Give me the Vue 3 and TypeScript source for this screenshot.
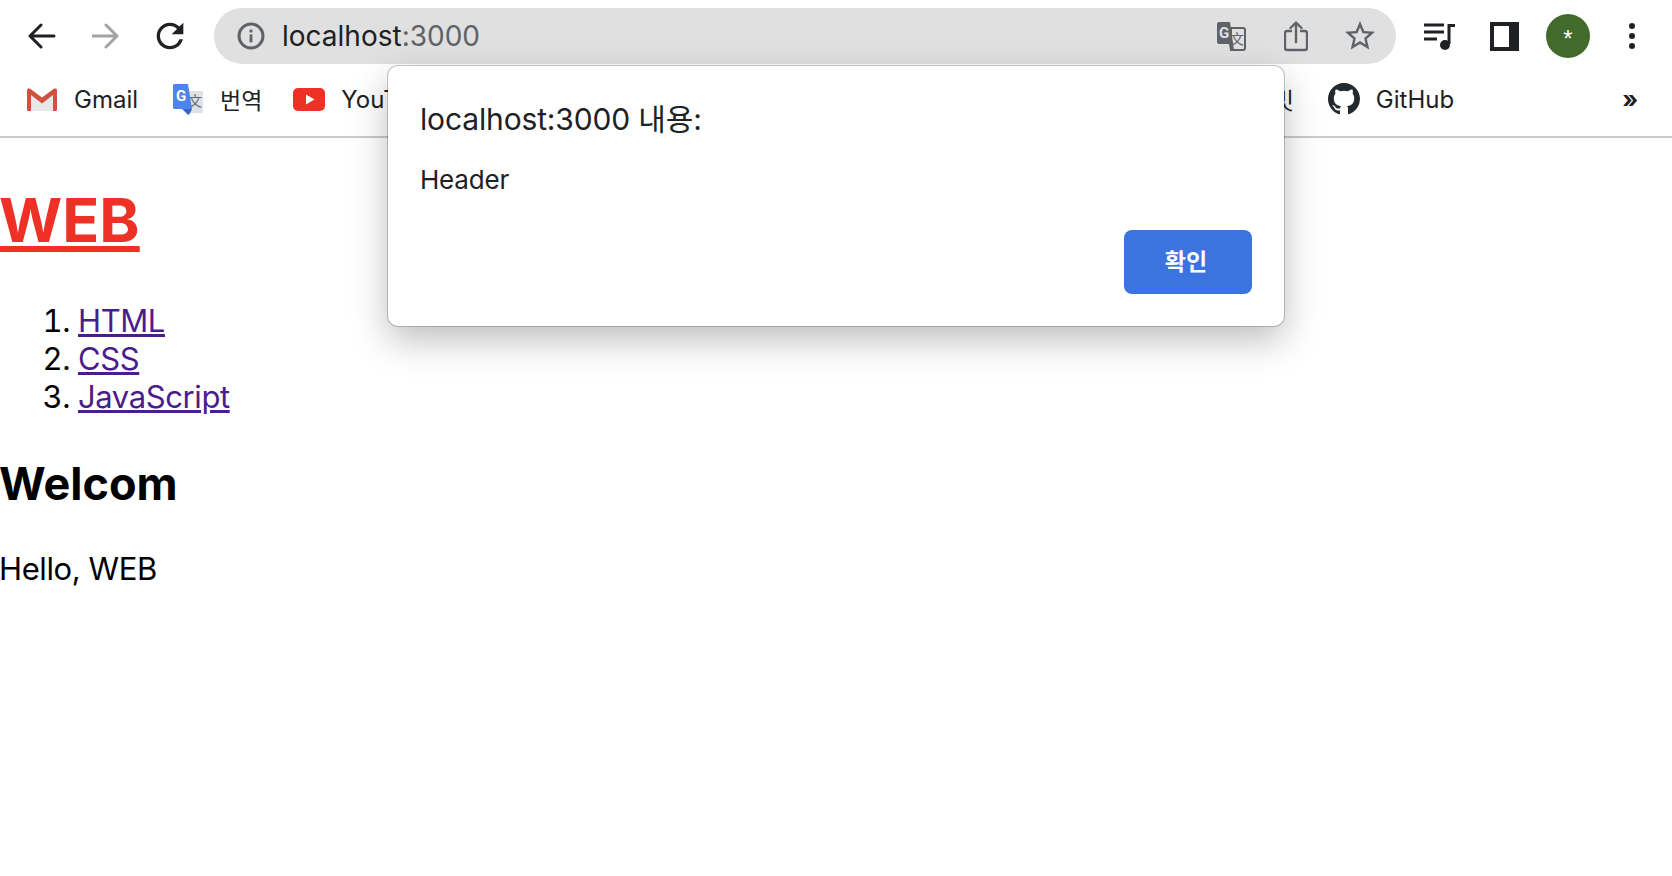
<template>
  <div class="browser">
    <header class="toolbar">
      <button class="tool" aria-label="back">
        <svg width="28" height="28" viewBox="0 0 28 28"><path d="M26 14H2M13 3 2 14l11 11" class="stroke dark" /></svg>
      </button>
      <button class="tool" aria-label="forward">
        <svg width="28" height="28" viewBox="0 0 28 28"><path d="M1 14h24M14 3l11 11-11 11" class="stroke muted" /></svg>
      </button>
      <button class="tool" aria-label="reload">
        <svg width="40" height="40" viewBox="0 0 24 24"><path fill="#202124" d="M17.65 6.35A7.958 7.958 0 0 0 12 4c-4.42 0-7.99 3.58-7.99 8s3.57 8 7.99 8c3.73 0 6.84-2.55 7.73-6h-2.08A5.99 5.99 0 0 1 12 18c-3.31 0-6-2.69-6-6s2.69-6 6-6c1.66 0 3.14.69 4.22 1.78L13 11h7V4l-2.35 2.35z" /></svg>
      </button>

      <div class="omnibox">
        <svg class="info" width="28" height="28" viewBox="0 0 28 28">
          <circle cx="14" cy="14" r="12" fill="none" stroke="#5f6368" stroke-width="3" />
          <rect x="12.6" y="12.4" width="2.8" height="8" fill="#5f6368" />
          <rect x="12.6" y="7.6" width="2.8" height="2.8" fill="#5f6368" />
        </svg>
        <span class="url">localhost<span class="url-port">:3000</span></span>
        <div class="omni-actions">
          <svg class="omni-translate" width="30" height="30" viewBox="0 0 30 30">
            <path d="M1 3a2 2 0 0 1 2-2h11l4 28h-4l-1-6H3a2 2 0 0 1-2-2z" fill="#5f6368" />
            <path d="M15 7h12a2 2 0 0 1 2 2v18a2 2 0 0 1-2 2H15z" fill="none" stroke="#5f6368" stroke-width="2" />
            <text x="8" y="17" class="glyph-g">G</text>
            <text x="21" y="23" class="glyph-wen" fill="#5f6368">文</text>
          </svg>
          <svg class="omni-share" width="24" height="32" viewBox="0 0 24 32">
            <path d="M7 11H3a2 2 0 0 0-2 2v15a2 2 0 0 0 2 2h18a2 2 0 0 0 2-2V13a2 2 0 0 0-2-2h-4M12 22V3M6.500 8 12 2.500 17.500 8" class="stroke grey" />
          </svg>
          <svg width="36" height="36" viewBox="0 0 24 24">
            <path fill="#5f6368" d="M22 9.24l-7.19-.62L12 2 9.19 8.63 2 9.24l5.460 4.730L5.820 21 12 17.270 18.180 21l-1.630-7.030L22 9.240zM12 15.400l-3.760 2.270 1-4.280-3.320-2.880 4.380-.38L12 6.100l1.710 4.040 4.380.38-3.320 2.880 1 4.280L12 15.400z" />
          </svg>
        </div>
      </div>

      <button class="tool tool-first" aria-label="media">
        <svg width="32" height="28" viewBox="0 0 32 28">
          <path d="M0 3h20M0 10h20M0 17h13" stroke="#202124" stroke-width="3" fill="none" />
          <path d="M25 22V3.500h6" stroke="#202124" stroke-width="3" fill="none" />
          <circle cx="21" cy="23" r="5" fill="#202124" />
        </svg>
      </button>
      <button class="tool" aria-label="side panel">
        <svg width="29" height="29" viewBox="0 0 29 29">
          <rect width="29" height="29" fill="#202124" />
          <rect x="4" y="4" width="15" height="21" fill="#fff" />
        </svg>
      </button>
      <button class="tool" aria-label="profile">
        <span class="avatar">*</span>
      </button>
      <button class="tool" aria-label="menu">
        <svg width="8" height="26" viewBox="0 0 8 26">
          <circle cx="4" cy="3" r="3" fill="#202124" />
          <circle cx="4" cy="13" r="3" fill="#202124" />
          <circle cx="4" cy="23" r="3" fill="#202124" />
        </svg>
      </button>
    </header>

    <nav class="bookmarks">
      <a class="mark mark-gmail">
        <svg width="30" height="23" viewBox="0 0 30 23">
          <path d="M0 2 15 13 30 2v21H0z" fill="#e8e8e8" />
          <path d="M4 23H1.500A1.500 1.500 0 0 1 0 21.500V2.500C0 .5 2 0 3.500 1L15 9.500 26.500 1C28 0 30 .5 30 2.500v19a1.500 1.500 0 0 1-1.500 1.500H26V7L15 15.500 4 7z" fill="#d2503f" />
        </svg>
        <span>Gmail</span>
      </a>
      <a class="mark mark-translate">
        <svg width="30" height="31" viewBox="0 0 30 31">
          <rect x="14" y="7" width="16" height="22" rx="1" fill="#dfe1e3" />
          <text x="22" y="22" class="glyph-wen" fill="#5f6b7a">文</text>
          <path d="M1.500 0H15l4 25h-3l-1 6-6-6H1.500A1.500 1.500 0 0 1 0 23.500v-22A1.500 1.500 0 0 1 1.500 0z" fill="#4c85ec" />
          <path d="M10 25h9l-3 6z" fill="#3e5ec4" />
          <text x="8" y="17" class="glyph-g g-white">G</text>
        </svg>
        <span class="mark-ko">번역</span>
      </a>
      <a class="mark mark-youtube">
        <svg width="32" height="23" viewBox="0 0 32 23">
          <rect width="32" height="23" rx="5" fill="#ee3124" />
          <path d="M13 6.500v10l8.500-5z" fill="#fff" />
        </svg>
        <span>YouTube</span>
      </a>
      <a class="mark mark-hidden"><span class="mark-ko">빗</span></a>
      <a class="mark mark-github">
        <svg width="32" height="32" viewBox="0 0 16 16">
          <path fill="#24292e" d="M8 0C3.580 0 0 3.580 0 8c0 3.540 2.290 6.530 5.470 7.590.4.070.55-.17.55-.38 0-.19-.01-.82-.01-1.490-2.010.37-2.530-.49-2.690-.94-.09-.23-.48-.94-.82-1.130-.28-.15-.68-.52-.01-.53.63-.01 1.080.58 1.230.82.720 1.210 1.870.87 2.330.66.070-.52.28-.87.51-1.070-1.780-.2-3.640-.89-3.640-3.950 0-.87.31-1.590.82-2.150-.08-.2-.36-1.020.08-2.120 0 0 .67-.21 2.200.82.640-.18 1.320-.27 2-.27s1.360.09 2 .27c1.530-1.040 2.200-.82 2.200-.82.44 1.100.16 1.920.08 2.120.51.56.82 1.270.82 2.150 0 3.070-1.870 3.750-3.650 3.950.29.25.54.73.54 1.480 0 1.070-.01 1.930-.01 2.200 0 .21.15.46.55.38A8.013 8.013 0 0 0 16 8c0-4.420-3.580-8-8-8z" />
        </svg>
        <span>GitHub</span>
      </a>
      <span class="more">»</span>
    </nav>

    <main class="page">
      <h1><a href="#" class="home-link">{{ site }}</a></h1>
      <ol>
        <li v-for="topic in topics" :key="topic"><a href="#" class="topic-link">{{ topic }}</a></li>
      </ol>
      <h2>Welcom</h2>
      <p>Hello, {{ site }}</p>
    </main>

    <div class="alert" role="alertdialog">
      <div class="alert__title">localhost:3000 내용:</div>
      <div class="alert__message">Header</div>
      <div class="alert__actions">
        <button class="alert__ok">확인</button>
      </div>
    </div>
  </div>
</template>

<script setup lang="ts">
  const site = 'WEB'
  const topics: string[] = ['HTML', 'CSS', 'JavaScript']
</script>

<style>
html, body {
  margin: 0;
  background: #fff;
}
</style>

<style scoped>
.browser {
  position: relative;
  width: 1672px;
  height: 876px;
  overflow: hidden;
  font-family: Inter, "Noto Sans CJK KR", sans-serif;
  color: #000;
}

.toolbar {
  display: flex;
  align-items: center;
  height: 72px;
  padding-left: 10px;
  box-sizing: border-box;
}

.tool {
  display: flex;
  align-items: center;
  justify-content: center;
  flex: none;
  width: 64px;
  height: 56px;
  padding: 0;
  border: none;
  background: none;
}

.stroke {
  fill: none;
  stroke-width: 3;
  stroke-linecap: round;
  stroke-linejoin: round;
}

.dark {
  stroke: #202124;
}

.muted {
  stroke: #a3a3a3;
}

.grey {
  stroke: #5f6368;
  stroke-width: 2.4;
}

.omnibox {
  display: flex;
  align-items: center;
  flex: none;
  box-sizing: border-box;
  width: 1182px;
  height: 56px;
  margin: 0 12px;
  padding: 0 18px 0 23px;
  border-radius: 28px;
  background: #e0e0e0;
}

.info {
  flex: none;
}

.url {
  margin-left: 17px;
  font-size: 28px;
  color: #202124;
}

.url-port {
  color: #5f6368;
}

.omni-actions {
  display: flex;
  align-items: center;
  margin-left: auto;
}

.omni-translate {
  margin-right: 38px;
}

.omni-share {
  margin-right: 34px;
}

.glyph-g {
  font-family: Roboto, sans-serif;
  font-size: 15px;
  font-weight: 700;
  fill: #e0e0e0;
  text-anchor: middle;
}

.g-white {
  fill: #fff;
}

.glyph-wen {
  font-family: "Noto Sans CJK SC", sans-serif;
  font-size: 14px;
  text-anchor: middle;
}

.avatar {
  display: flex;
  align-items: center;
  justify-content: center;
  width: 44px;
  height: 44px;
  border-radius: 50%;
  background: #426a2a;
  color: #fff;
  font-size: 24px;
  font-weight: 500;
  padding-top: 6px;
  box-sizing: border-box;
}

.bookmarks {
  display: flex;
  align-items: center;
  box-sizing: border-box;
  height: 66px;
  padding: 0 34px 10px 27px;
  border-bottom: 2px solid #c9cacb;
  font-size: 24px;
  color: #202124;
  white-space: nowrap;
}

.mark {
  display: flex;
  align-items: center;
  gap: 18px;
  flex: none;
}

.mark-gmail {
  gap: 17px;
}

.mark-ko {
  font-size: 23px;
  margin-left: -1px;
}

.mark-translate {
  margin-left: 35px;
}

.mark-youtube {
  gap: 16px;
  margin-left: 31px;
}

.mark-hidden {
  margin-left: auto;
}

.mark-github {
  gap: 16px;
  margin-left: 34px;
}

.more {
  margin-left: 168px;
  font-size: 24px;
  font-weight: 700;
}

.page {
  font-size: 31px;
  line-height: 38px;
  letter-spacing: -0.4px;
}

h1 {
  margin: 44px 0 43px -1px;
  font-size: 61px;
  line-height: 77px;
  font-weight: 700;
  letter-spacing: 0;
}

.home-link {
  color: #ee3124;
}

ol {
  margin: 0;
  padding-left: 78px;
}

.topic-link {
  color: #4b1d8a;
}

h2 {
  margin: 39px 0 0 -1px;
  font-size: 45px;
  line-height: 58px;
  font-weight: 700;
  letter-spacing: 0;
}

p {
  margin: 37px 0 0 -1px;
}

.alert {
  position: absolute;
  top: 66px;
  left: 388px;
  box-sizing: border-box;
  width: 896px;
  height: 260px;
  padding: 32px;
  background: #fff;
  border-radius: 10px;
  box-shadow: 0 0 0 1px rgba(0, 0, 0, 0.2), 0 14px 36px rgba(0, 0, 0, 0.26);
  color: #202124;
}

.alert__title {
  font-size: 30px;
  line-height: 43px;
  letter-spacing: -0.15px;
}

.alert__message {
  margin-top: 21px;
  font-size: 26px;
  line-height: 36px;
  letter-spacing: -0.2px;
}

.alert__actions {
  display: flex;
  justify-content: flex-end;
  margin-top: 32px;
}

.alert__ok {
  width: 128px;
  height: 64px;
  padding: 0 4px 4px 0;
  border: none;
  border-radius: 8px;
  background: #3b73e0;
  color: #fff;
  font-family: inherit;
  font-size: 23px;
  font-weight: 600;
}
</style>
